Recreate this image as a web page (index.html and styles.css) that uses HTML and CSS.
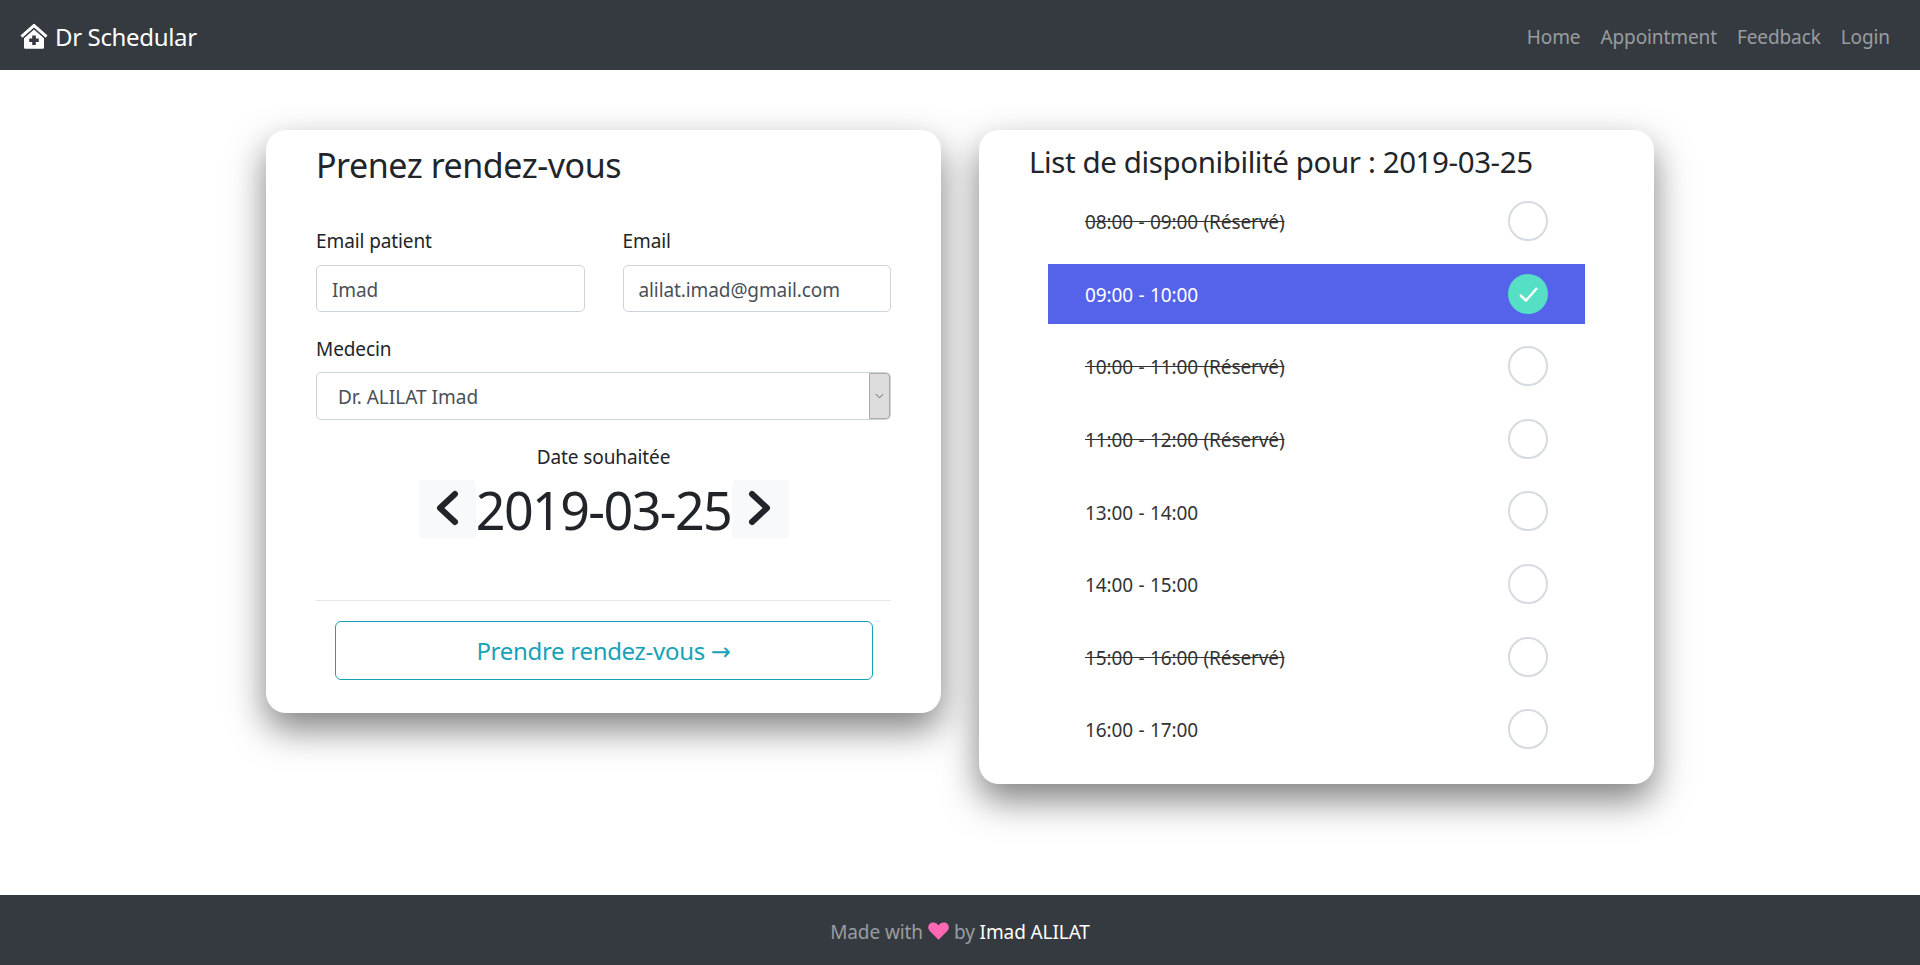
FILE: index.html
```html
<!DOCTYPE html>
<html lang="fr">
<head>
    <meta charset="UTF-8">
    <meta name="viewport" content="width=device-width, initial-scale=1.0">
    <title>Dr Schedular</title>
    <link rel="stylesheet" href="styles.css">
</head>
<body>
    <nav class="navbar">
        <a class="brand" href="#">
            <svg class="brand-icon" viewBox="0 0 28 26" aria-hidden="true">
                <path d="M14 1 L27 12.5 L25.6 14.2 L14 4 L2.4 14.2 L1 12.5 Z" fill="#fff" stroke="#fff" stroke-width="1" stroke-linejoin="round"/>
                <path fill-rule="evenodd" fill="#fff" d="M14 6.5 L24 15.2 V24.5 A1.2 1.2 0 0 1 22.8 25.7 H5.2 A1.2 1.2 0 0 1 4 24.5 V15.2 Z M12.2 12.5 V15.6 H9.2 V19 H12.2 V22 H15.8 V19 H18.8 V15.6 H15.8 V12.5 Z"/>
            </svg>
            <span>Dr Schedular</span>
        </a>
        <ul class="nav-links">
            <li><a href="#">Home</a></li>
            <li><a href="#">Appointment</a></li>
            <li><a href="#">Feedback</a></li>
            <li><a href="#">Login</a></li>
        </ul>
    </nav>

    <main class="content">
        <form class="card card-form">
            <h1 class="form-title">Prenez rendez-vous</h1>

            <div class="form-row">
                <div class="form-group">
                    <label for="patient">Email patient</label>
                    <input type="text" id="patient" value="Imad">
                </div>
                <div class="form-group">
                    <label for="email">Email</label>
                    <input type="text" id="email" value="alilat.imad@gmail.com">
                </div>
            </div>

            <div class="form-group group-select">
                <label for="medecin">Medecin</label>
                <div class="select-wrap">
                    <select id="medecin">
                        <option>Dr. ALILAT Imad</option>
                    </select>
                    <span class="select-arrow">
                        <svg viewBox="0 0 10 6" aria-hidden="true"><path d="M1 1 L5 5 L9 1" fill="none" stroke="#555" stroke-width="1"/></svg>
                    </span>
                </div>
            </div>

            <div class="date-picker">
                <div class="date-label">Date souhaitée</div>
                <div class="date-row">
                    <button type="button" class="date-btn">
                        <svg viewBox="0 0 24 36" aria-hidden="true"><path d="M20 4 L5 18 L20 32" fill="none" stroke="#212529" stroke-width="6" stroke-linecap="round" stroke-linejoin="round"/></svg>
                    </button>
                    <span class="date-value">2019-03-25</span>
                    <button type="button" class="date-btn">
                        <svg viewBox="0 0 24 36" aria-hidden="true"><path d="M4 4 L19 18 L4 32" fill="none" stroke="#212529" stroke-width="6" stroke-linecap="round" stroke-linejoin="round"/></svg>
                    </button>
                </div>
            </div>

            <hr class="divider">
            <button type="submit" class="btn-submit">Prendre rendez-vous <span class="arrow">→</span></button>
        </form>

        <section class="card card-list">
            <h2 class="list-title">List de disponibilité pour : 2019-03-25</h2>
            <ul class="slots">
                <li class="slot"><s>08:00 - 09:00 (Réservé)</s><span class="check"></span></li>
                <li class="slot selected"><span>09:00 - 10:00</span>
                    <span class="check">
                        <svg viewBox="0 0 40 40" aria-hidden="true"><path d="M12 21 L18 26.5 L29 14" fill="none" stroke="#fff" stroke-width="2.4"/></svg>
                    </span>
                </li>
                <li class="slot"><s>10:00 - 11:00 (Réservé)</s><span class="check"></span></li>
                <li class="slot"><s>11:00 - 12:00 (Réservé)</s><span class="check"></span></li>
                <li class="slot"><span>13:00 - 14:00</span><span class="check"></span></li>
                <li class="slot"><span>14:00 - 15:00</span><span class="check"></span></li>
                <li class="slot"><s>15:00 - 16:00 (Réservé)</s><span class="check"></span></li>
                <li class="slot"><span>16:00 - 17:00</span><span class="check"></span></li>
            </ul>
        </section>
    </main>

    <footer class="footer">
        <span>Made with</span>
        <svg class="heart" viewBox="0 0 24 20" aria-hidden="true"><path d="M12 20 L2 10 C-1 7 0 1.5 4.5 .4 C7.5 -.3 10.5 1 12 3.6 C13.5 1 16.5 -.3 19.5 .4 C24 1.5 25 7 22 10 Z" fill="#ff69b4"/></svg>
        <span>by <a href="#">Imad ALILAT</a></span>
    </footer>
</body>
</html>
```

FILE: styles.css
```css
* {
    box-sizing: border-box;
}
body {
    margin: 0;
    min-height: 100vh;
    display: flex;
    flex-direction: column;
    font-family: "Noto Sans", "Open Sans", Arial, sans-serif;
    font-size: 19px;
    letter-spacing: -0.1px;
    line-height: 1.5;
    color: #212529;
    background-color: #fff;
}
a {
    text-decoration: none;
}

/* navbar */
.navbar {
    height: 70px;
    flex-shrink: 0;
    display: flex;
    align-items: center;
    justify-content: space-between;
    padding: 4px 30px 0 20px;
    background-color: #343a40;
}
.brand {
    display: flex;
    align-items: center;
    gap: 7px;
    color: #fff;
    font-size: 24px;
    letter-spacing: -0.35px;
}
.brand-icon {
    width: 28px;
    height: 26px;
    margin-top: -3px;
}
.nav-links {
    display: flex;
    gap: 20px;
    margin: 0;
    padding: 0;
    list-style: none;
}
.nav-links a {
    color: rgba(255, 255, 255, 0.5);
}

/* main */
.content {
    flex: 1;
    display: flex;
    justify-content: center;
    align-items: flex-start;
    gap: 38px;
    padding-top: 60px;
}
.card {
    width: 675px;
    background-color: #fff;
    border-radius: 20px;
    box-shadow: 0 16px 36px rgba(0, 0, 0, 0.5);
}
.card-form {
    height: 583px;
    padding: 0 50px;
}
.form-title {
    margin: 0;
    padding-top: 12px;
    font-size: 34px;
    font-weight: 400;
    line-height: 46px;
    letter-spacing: -0.45px;
}
.form-row {
    display: flex;
    gap: 38px;
    margin-top: 40px;
}
.form-row .form-group {
    flex: 1;
}
.form-group label {
    display: block;
    height: 27px;
    margin-bottom: 10px;
    line-height: 27px;
}
.form-group input {
    display: block;
    width: 100%;
    height: 47px;
    padding: 2px 15px 0;
    border: 1px solid #ced4da;
    border-radius: 5px;
    font: inherit;
    letter-spacing: inherit;
    color: #495057;
}
.group-select {
    margin-top: 24px;
}
.group-select label {
    margin-bottom: 9px;
}
.select-wrap {
    position: relative;
}
.select-wrap select {
    display: block;
    width: 100%;
    height: 48px;
    padding: 2px 21px 0;
    border: 1px solid #ced4da;
    border-radius: 5px;
    background-color: #fff;
    font: inherit;
    letter-spacing: 0;
    color: #495057;
    appearance: none;
}
.select-arrow {
    position: absolute;
    top: 1px;
    right: 1px;
    bottom: 1px;
    width: 21px;
    display: flex;
    align-items: center;
    justify-content: center;
    background-color: #ddd;
    border: 1px solid #aaa;
    border-radius: 0 4px 4px 0;
}
.select-arrow svg {
    width: 9px;
    height: 6px;
}
.date-picker {
    text-align: center;
    margin-top: 24px;
}
.date-label {
    height: 27px;
    line-height: 27px;
}
.date-row {
    display: flex;
    justify-content: center;
    margin-top: 9px;
}
.date-btn {
    width: 57px;
    height: 58px;
    padding: 0 0 2px;
    border: 0;
    border-radius: 4px;
    background-color: #f8f9fa;
}
.date-btn svg {
    display: block;
    width: 24px;
    height: 36px;
    margin: 0 auto;
}
.date-value {
    width: 256px;
    margin-top: -2px;
    font-size: 52px;
    line-height: 64px;
    letter-spacing: -1.6px;
    white-space: nowrap;
}
.divider {
    margin: 58px 0 20px;
    border: 0;
    border-top: 1px solid #e5e7e9;
}
.btn-submit {
    display: block;
    width: 538px;
    height: 59px;
    margin: 0 auto;
    border: 1px solid #17a2b8;
    border-radius: 6px;
    background: transparent;
    font-family: inherit;
    font-size: 24px;
    letter-spacing: -0.3px;
    color: #17a2b8;
}
.arrow {
    font-family: "DejaVu Sans", sans-serif;
    font-size: 24px;
}

.card-list {
    height: 654px;
    padding: 0 50px;
}
.list-title {
    margin: 0;
    padding-top: 12px;
    font-size: 29.5px;
    font-weight: 400;
    line-height: 40px;
    letter-spacing: -0.4px;
}
.slots {
    display: flex;
    flex-direction: column;
    gap: 12.6px;
    margin: 9px 19px 0;
    padding: 0;
    list-style: none;
}
.slot {
    height: 60px;
    display: flex;
    align-items: center;
    justify-content: space-between;
    padding: 0 37px;
    word-spacing: 0.6px;
    color: #333;
}
.slot > :first-child {
    margin-top: 3px;
}
.slot.selected {
    background-color: #5563eb;
    color: #fff;
}
.check {
    width: 40px;
    height: 40px;
    border: 2px solid #d5dbe1;
    border-radius: 50%;
}
.selected .check {
    border: 0;
    background-color: #55dfc4;
}
.check svg {
    display: block;
}

/* footer */
.footer {
    height: 70px;
    flex-shrink: 0;
    display: flex;
    align-items: center;
    justify-content: center;
    gap: 5px;
    padding-top: 4px;
    background-color: #343a40;
    color: rgba(255, 255, 255, 0.5);
}
.footer a {
    color: #fff;
}
.heart {
    width: 21px;
    height: 18px;
    margin-top: -3px;
}
```
